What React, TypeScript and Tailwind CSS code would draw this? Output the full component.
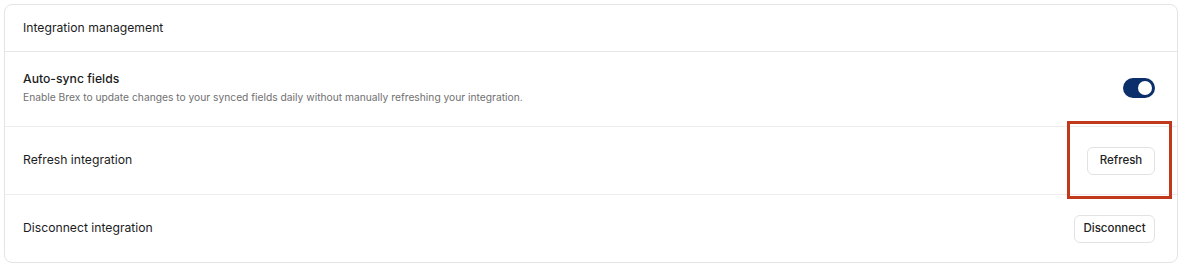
import React from "react";

export default function App() {
  return (
    <div className="w-[1188px] h-[271px] bg-white pt-[4px] pl-[4px]" style={{ fontFamily: "Inter, 'Noto Sans', sans-serif" }}>
      <div className="w-[1174px] h-[259px] rounded-[8px] border border-[#e4e4e4] flex flex-col text-[#1c1c1c]">
        <div className="h-[47px] flex items-center pl-[18px] border-b border-[#e8e8e8] text-[12.2px]">
          Integration management
        </div>
        <div className="h-[75px] flex items-center justify-between pl-[18px] pr-[22px] border-b border-[#ededed]">
          <div className="flex flex-col">
            <div className="text-[12.2px] leading-[18px] mt-[-4px] font-medium">Auto-sync fields</div>
            <div className="text-[10.25px] leading-[14px] mt-[2px] text-[#707070]">
              Enable Brex to update changes to your synced fields daily without manually refreshing your integration.
            </div>
          </div>
          <div className="w-[32px] h-[20px] rounded-full bg-[#0b2f6b] flex items-center justify-end pr-[3px] mt-[-3px]">
            <div className="w-[14px] h-[14px] rounded-full bg-white" />
          </div>
        </div>
        <div className="h-[68px] flex items-center justify-between pl-[18px] pr-[22px] border-b border-[#ededed]">
          <div className="text-[12.2px]">Refresh integration</div>
          <div className="relative">
            <button className="h-[28px] w-[68px] rounded-[6px] border border-[#e2e2e2] bg-white text-[11.5px] font-medium text-[#222] mt-[1px]">
              Refresh
            </button>
            <div className="absolute left-[-20px] right-[-17px] top-[-25px] bottom-[-24px] border-[3px] border-[#c0391b] pointer-events-none" />
          </div>
        </div>
        <div className="flex-1 flex items-center justify-between pl-[18px] pr-[22px]">
          <div className="text-[12.2px]">Disconnect integration</div>
          <button className="h-[28px] w-[81px] rounded-[6px] border border-[#e2e2e2] bg-white text-[11.5px] font-medium text-[#222]">
            Disconnect
          </button>
        </div>
      </div>
    </div>
  );
}
